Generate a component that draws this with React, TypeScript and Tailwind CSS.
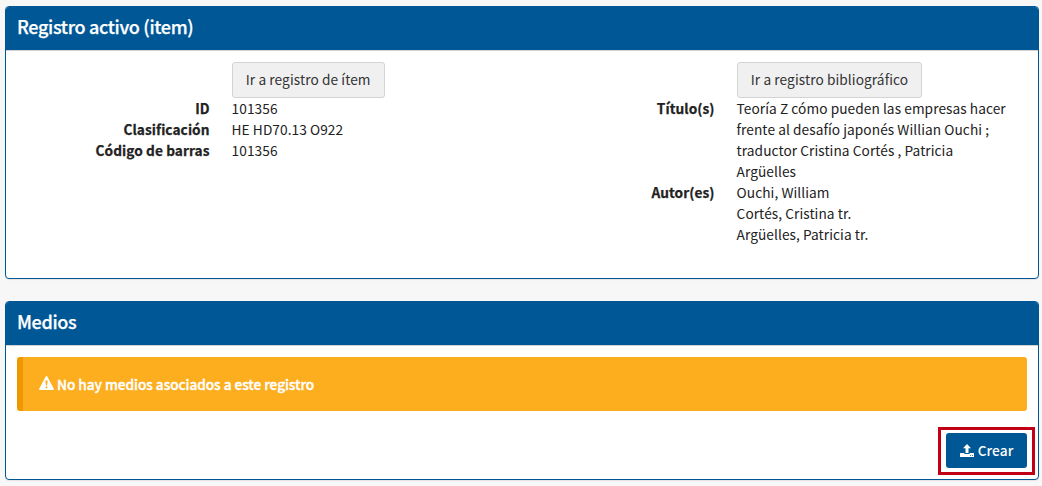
import type { ReactNode } from "react";

function WarningIcon() {
  return (
    <svg viewBox="0 0 15 13" className="mt-[-3px] h-[14px] w-[15px] shrink-0" preserveAspectRatio="none" fill="currentColor">
      <path
        fillRule="evenodd"
        d="M6.7.5Q7.5-.5 8.3.5L14.8 11.9Q15.2 13 14 13H1Q-.2 13 .2 11.9ZM6.4 4.2V5.2L6.9 8.7H8.1L8.6 5.2V4.2ZM6.6 9.7V11.3H8.4V9.7Z"
      />
    </svg>
  );
}

function UploadIcon() {
  return (
    <svg viewBox="0 0 14 13" className="h-[13px] w-[14px] shrink-0" fill="currentColor">
      <path d="M7 0L11 4.200H8.500V9H5.500V4.200H3Z" />
      <path fillRule="evenodd" d="M.5 9H4.400V10H9.600V9H13.500Q14 9 14 9.500V12.500Q14 13 13.500 13H.5Q0 13 0 12.500V9.500Q0 9 .5 9ZM10 11.300V12H11V11.300ZM12 11.300V12H13V11.300Z" />
    </svg>
  );
}

function Panel({ title, className, children }: { title: string; className: string; children: ReactNode }) {
  return (
    <section className={`w-[1034px] overflow-hidden rounded-[4px] border border-[#005795] bg-white shadow-[0_1px_1px_rgba(0,0,0,0.08)] ${className}`}>
      <header className="flex h-[44px] items-center border-b border-[#d2d2d2] bg-[#005795] px-[11px] pb-[5px] text-white">
        <h2 className="text-[18px] leading-5 font-medium tracking-[-0.32px] [-webkit-text-stroke:0.25px_currentColor]">{title}</h2>
      </header>
      {children}
    </section>
  );
}

function Field({ label, children }: { label?: string; children: ReactNode }) {
  return (
    <div className="flex gap-[22px]">
      <dt className="w-[193px] shrink-0 text-right font-bold [-webkit-text-stroke:0.25px_currentColor]">{label}</dt>
      <dd className="w-[275px]">{children}</dd>
    </div>
  );
}

function LinkButton({ children }: { children: ReactNode }) {
  return (
    <button className="block h-9 rounded-[3px] border border-[#d3d3d3] bg-[#f0f0f0] px-[13.2px] pb-[2px] tracking-[0.08px] whitespace-nowrap text-[#333]">
      {children}
    </button>
  );
}

export default function App() {
  return (
    <main className="h-[486px] w-[1042px] overflow-hidden bg-[#f7f7f7] pt-[6px] pl-[5px] font-['Noto_Sans_CJK_SC',sans-serif] text-[13.7px] leading-[21px] tracking-[0.06px] text-[#222]">
      <Panel title="Registro activo (item)" className="h-[273px]">
        <div className="flex gap-[10px] pt-[11px] pl-[10.6px]">
          <dl className="w-[495px]">
            <Field><LinkButton>Ir a registro de ítem</LinkButton></Field>
            <Field label="ID">101356</Field>
            <Field label="Clasificación">HE HD70.13 O922</Field>
            <Field label="Código de barras">101356</Field>
          </dl>
          <dl className="w-[495px]">
            <Field><LinkButton>Ir a registro bibliográfico</LinkButton></Field>
            <Field label="Título(s)">
              Teoría Z cómo pueden las empresas hacer frente al desafío japonés Willian Ouchi ; traductor Cristina Cortés , Patricia Argüelles
            </Field>
            <Field label="Autor(es)">
              <p>Ouchi, William</p>
              <p>Cortés, Cristina tr.</p>
              <p>Argüelles, Patricia tr.</p>
            </Field>
          </dl>
        </div>
      </Panel>

      <Panel title="Medios" className="mt-[22px] h-[179px]">
        <div className="px-[11px] pt-[11px]">
          <div className="flex h-[54px] items-center gap-[3px] rounded-[3px] border-l-[6px] border-[#ef9700] bg-[#fdae1e] pl-4 font-medium tracking-[-0.06px] text-white">
            <WarningIcon />
            <span className="[-webkit-text-stroke:0.35px_currentColor]">No hay medios asociados a este registro</span>
          </div>
        </div>
        <div className="mt-4 mr-[3px] ml-auto h-[48px] w-[97px] border-[3px] border-[#c10016] px-[5px] pt-[3px]">
          <button className="flex h-[35px] w-[81px] items-center justify-center gap-1 rounded-[3px] bg-[#005795] font-medium text-white">
            <UploadIcon />
            <span>Crear</span>
          </button>
        </div>
      </Panel>
    </main>
  );
}
